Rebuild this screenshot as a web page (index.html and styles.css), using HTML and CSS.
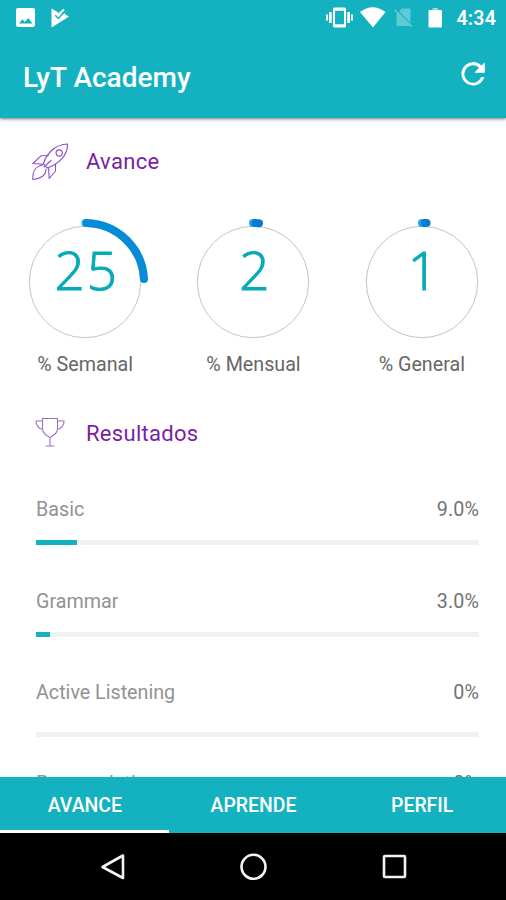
FILE: index.html
```html
<!DOCTYPE html>
<html lang="es">
<head>
<meta charset="utf-8">
<title>LyT Academy</title>
<link rel="stylesheet" href="styles.css">
</head>
<body>
<div class="phone">
  <header class="top">
    <div class="status">
      <svg class="status-left" width="56" height="20" viewBox="0 0 56 20" fill="#fff">
        <path fill-rule="evenodd" d="M2 0h15a2 2 0 0 1 2 2v15a2 2 0 0 1-2 2H2a2 2 0 0 1-2-2V2a2 2 0 0 1 2-2zM3 15.500h13.500l-4.300-5.500-3.400 4-2.400-2.700z"/>
        <path d="M35.500 .5L41.500 4l2 2.500L48 4.500l2 2.500 3 1.500L36.500 19q-1 .4-1-1z"/>
        <path d="M39.300 7.300l3 3.200 6.700-7" fill="none" stroke="#14b2c1" stroke-width="1.500"/>
        <path d="M42.500 6.500l5.500-5" fill="none" stroke="#fff" stroke-width="2"/>
      </svg>
      <div class="status-right">
        <svg width="118" height="22" viewBox="0 0 118 22" fill="#fff">
          <path fill-rule="evenodd" d="M8.500 0.500h10a1.500 1.500 0 0 1 1.500 1.500v17a1.500 1.500 0 0 1-1.500 1.500h-10A1.500 1.500 0 0 1 7 19V2A1.500 1.500 0 0 1 8.500 0.500zM9 3.700v13.600h9V3.700z"/>
          <path d="M0 7.500h2v6H0zM3 5h2.700v11H3zM21.300 5h2.700v11h-2.700zM25 7.500h2v6h-2z"/>
          <path d="M34 5Q46.500-4.500 59.500 5L47 20.500z"/>
          <path d="M76 1.500H84.500v17.500H70.500V7z" fill="#5dcad4"/>
          <path d="M69.500 2l18 18" stroke="#14b2c1" stroke-width="1.500"/>
          <path d="M68.500 2.800l17.500 17" stroke="#68ced7" stroke-width="1.200"/>
          <path fill="#8fdbe2" d="M106.500 1h5.500v2h-5.500z"/>
          <path d="M103.500 3h11.500a1 1 0 0 1 1 1v15.500a1 1 0 0 1-1 1h-11.500a1 1 0 0 1-1-1V4a1 1 0 0 1 1-1z"/>
        </svg>
        <span class="clock">4:34</span>
      </div>
    </div>
    <div class="appbar">
      <h1>LyT Academy</h1>
      <svg class="refresh" width="24" height="24" viewBox="0 0 24 24"><path d="M20.400 3.500A11.700 11.700 0 1 0 23.400 15h-3.200a8.700 8.700 0 1 1-2.100-9.200L13.300 10.800H23.800V.5z" fill="#fff"/></svg>
    </div>
  </header>

  <main class="content">
    <section>
      <div class="section-head">
        <svg class="section-icon" width="40" height="40" viewBox="0 0 40 40" fill="none" stroke="#8c4fc0" stroke-width="1.100" stroke-linejoin="round" stroke-linecap="round">
          <path d="M13.500 22.500C16 14 24 3.500 37.500 3 38 14 29 23 17 27z"/>
          <circle cx="29.200" cy="12" r="3.100"/>
          <path d="M18.500 14.800H11L2.800 22.500l10.700.8M25.500 23.500v6.500L19.200 37.500l-.6-10.500M12.500 24C5 25.500 2.500 30 2.800 38.500 10.500 37.500 16 35 16 28M14 26l7-6.500"/>
        </svg>
        <h2>Avance</h2>
      </div>
      <div class="gauges">
        <div class="gauge">
          <div class="dial">
            <svg width="130" height="130" viewBox="0 0 130 130" fill="none"><circle cx="65" cy="65" r="55.700" stroke="#c4c4c4"/><path d="M65.500 6h0" class="arc start"/><path d="M67 6A59 59 0 0 1 124 62" class="arc"/></svg>
            <span class="value two">25</span>
          </div>
          <div class="label">% Semanal</div>
        </div>
        <div class="gauge">
          <div class="dial">
            <svg width="130" height="130" viewBox="0 0 130 130" fill="none"><circle cx="65" cy="65" r="55.700" stroke="#c4c4c4"/><path d="M65 6h0" class="arc start"/><path d="M67.500 6A59 59 0 0 1 71 6.300" class="arc lead"/></svg>
            <span class="value">2</span>
          </div>
          <div class="label">% Mensual</div>
        </div>
        <div class="gauge">
          <div class="dial">
            <svg width="130" height="130" viewBox="0 0 130 130" fill="none"><circle cx="65" cy="65" r="55.700" stroke="#c4c4c4"/><path d="M65 6h0" class="arc start"/><path d="M68 6h1.500" class="arc lead"/></svg>
            <span class="value">1</span>
          </div>
          <div class="label">% General</div>
        </div>
      </div>
    </section>
    <section>
      <div class="section-head results-head">
        <svg class="section-icon" width="40" height="40" viewBox="0 0 40 40" fill="none" stroke="#a070c8" stroke-width="1.100">
          <path d="M12.500 5.500h15v10c0 5-4 7-7.500 9-3.500-2-7.500-4-7.500-9zM12.500 8h-6.500c0 4.500 2 7.500 7 8.500M27.500 8h6.500c0 4.500-2 7.500-7 8.500M20 24.500v8.500M15.500 33h9"/>
        </svg>
        <h2>Resultados</h2>
      </div>
      <div class="results">
        <div class="result"><div class="row"><span>Basic</span><span class="pct">9.0%</span></div><div class="track"><div class="fill" style="width:9.3%"></div></div></div>
        <div class="result"><div class="row"><span>Grammar</span><span class="pct">3.0%</span></div><div class="track"><div class="fill" style="width:3.1%"></div></div></div>
        <div class="result empty"><div class="row"><span>Active Listening</span><span class="pct">0%</span></div><div class="track"></div></div>
        <div class="result"><div class="row"><span>Pronunciation</span><span class="pct">0%</span></div><div class="track"></div></div>
      </div>
    </section>
  </main>

  <nav class="tabs">
    <div class="tab active">AVANCE</div>
    <div class="tab">APRENDE</div>
    <div class="tab">PERFIL</div>
  </nav>
  <footer class="system-nav">
    <svg width="28" height="30" viewBox="0 0 28 30"><path d="M24 3.500v22.500L3.500 15z"/></svg>
    <svg width="28" height="30" viewBox="0 0 28 30"><circle cx="14.500" cy="14.800" r="12"/></svg>
    <svg width="28" height="30" viewBox="0 0 28 30"><rect x="4" y="4" width="21" height="21" rx="1"/></svg>
  </footer>
</div>
</body>
</html>
```
FILE: styles.css
```css
* { box-sizing: border-box; }
body { margin: 0; background: #fff; font-family: Roboto, "Liberation Sans", sans-serif; }
svg { display: block; flex: none; }
h1, h2 { margin: 0; }
.phone { width: 506px; height: 900px; display: flex; flex-direction: column; overflow: hidden; }
.top { height: 118px; flex: none; background: #14b2c1; color: #fff; box-shadow: 0 1px 3px rgba(0, 0, 0, .55); z-index: 1; }
.status { height: 36px; display: flex; justify-content: space-between; padding: 7px 10px 0 16px; }
.status-left { margin-top: 1px; }
.status-right { display: flex; gap: 12px; }
.clock { font-size: 19.500px; line-height: 24px; font-weight: 600; letter-spacing: .2px; }
.appbar { height: 82px; display: flex; justify-content: space-between; padding: 25px 21px 0 23px; }
.appbar h1 { font-size: 28px; line-height: 34px; font-weight: 500; }
.refresh { margin-top: 1px; }
.content { flex: 1; min-height: 0; overflow: hidden; padding-top: 23px; }
.section-head { height: 40px; display: flex; align-items: center; gap: 16px; padding-left: 30px; }
.section-head h2 { font-size: 22px; font-weight: 400; color: #7b1fa2; letter-spacing: .3px; }
.gauges { display: grid; grid-template-columns: repeat(3, 1fr); padding: 36px 0 0 1px; }
.gauge { display: flex; flex-direction: column; align-items: center; }
.dial { display: grid; justify-items: center; }
.dial > * { grid-area: 1 / 1; }
.value { font: 300 53px/60px "Open Sans", "Noto Sans", sans-serif; color: #09aab8; padding: 23px 0 0 2px; -webkit-text-stroke: 1px #09aab8; }
.two { letter-spacing: 2px; padding-left: 3px; }
.arc { stroke: #068bd8; stroke-width: 8px; stroke-linecap: round; }
.start { stroke: #17aced; }
.lead { stroke: #087bd0; }
.label { height: 29px; font-size: 19.700px; line-height: 30px; color: #666; margin-top: 3px; }
.results-head { margin-top: 34px; }
.results { padding: 43px 27px 0 36px; }
.result { height: 91.500px; }
.row { display: flex; justify-content: space-between; font-size: 19.700px; line-height: 28px; color: #929292; }
.pct { color: #737373; letter-spacing: .1px; }
.track { height: 5px; margin-top: 16px; background: #f1f1f1; }
.fill { height: 5px; background: #14b2c1; }
.empty { height: 91px; }
.empty .track { margin-top: 25px; }
.tabs { height: 56px; flex: none; display: grid; grid-template-columns: repeat(3, 1fr); background: #14b2c1; color: #fff; }
.tab { padding-left: 1px; text-align: center; font-size: 19.400px; font-weight: 500; line-height: 58px; border-bottom: 3px solid transparent; height: 56px; }
.active { border-color: #fff; }
.system-nav { height: 67px; flex: none; background: #000; display: flex; justify-content: center; align-items: center; gap: 112.500px; }
.system-nav svg { fill: none; stroke: #f3f3f3; stroke-width: 2.600; stroke-linejoin: round; }
```
